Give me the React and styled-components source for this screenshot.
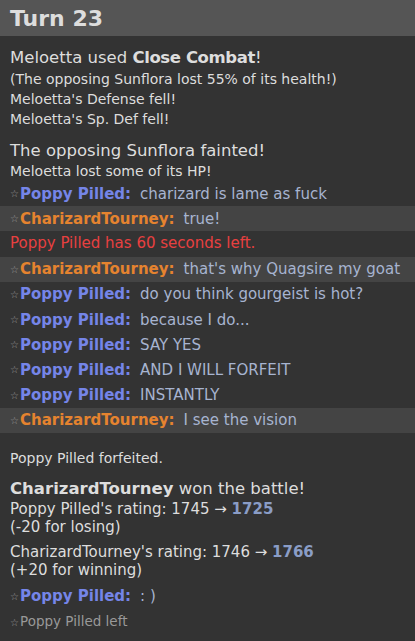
import React from 'react';
import styled, { createGlobalStyle } from 'styled-components';

const GlobalStyle = createGlobalStyle`
	html, body {
		margin: 0;
		padding: 0;
		background: #333333;
	}
	body {
		font-family: 'DejaVu Sans', Verdana, sans-serif;
		color: #dddddd;
	}
`;

const Page = styled.div`
	width: 415px;
	height: 641px;
	overflow: hidden;
	background: #333333;
`;

const Header = styled.h2`
	margin: 0;
	height: 36px;
	padding: 0 10px;
	display: flex;
	align-items: center;
	background: #555555;
	color: #dddddd;
	font-size: 22px;
	font-weight: bold;
`;

const Block = styled.div`
	margin-top: ${p => p.$top || 0}px;
`;

const Line = styled.div`
	padding: 0 10px;
	font-size: ${p => p.$size || 14}px;
	line-height: ${p => p.$lh || 20}px;
	color: ${p => p.$color || '#dddddd'};
	white-space: nowrap;
`;

const Move = styled.strong`
	letter-spacing: -0.4px;
`;

const ChatRow = styled.div`
	height: 25.2px;
	padding: 0 10px;
	display: flex;
	align-items: center;
	background: ${p => (p.$highlight ? '#444444' : 'transparent')};
	white-space: nowrap;
`;

const Star = styled.span`
	font-size: 10px;
	color: #999999;
	margin-right: 1px;
`;

const Name = styled.strong`
	font-size: 15px;
	color: ${p => p.$color};
	margin-right: 9px;
`;

const ChatText = styled.span`
	font-size: 15px;
	color: #a7b4d0;
`;

const Rating = styled.strong`
	color: #8a9dc6;
`;

const LeftNote = styled.div`
	padding: 0 10px;
	font-size: 13.5px;
	line-height: 25px;
	color: #999999;
`;

const users = {
	poppy: { name: 'Poppy Pilled', color: '#7585e8' },
	char: { name: 'CharizardTourney', color: '#e5832f' },
};

const chat = [
	{ who: 'poppy', text: 'charizard is lame as fuck' },
	{ who: 'char', text: 'true!' },
	{ timer: 'Poppy Pilled has 60 seconds left.' },
	{ who: 'char', text: "that's why Quagsire my goat" },
	{ who: 'poppy', text: 'do you think gourgeist is hot?' },
	{ who: 'poppy', text: 'because I do...' },
	{ who: 'poppy', text: 'SAY YES' },
	{ who: 'poppy', text: 'AND I WILL FORFEIT' },
	{ who: 'poppy', text: 'INSTANTLY' },
	{ who: 'char', text: 'I see the vision' },
];

const ChatLine = ({ who, text }) => {
	const user = users[who];
	return (
		<ChatRow $highlight={who === 'char'}>
			<Star>☆</Star>
			<Name $color={user.color}>{user.name}:</Name>
			<ChatText>{text}</ChatText>
		</ChatRow>
	);
};

const App = () => {
	return (
		<Page>
			<GlobalStyle />
			<Header>Turn 23</Header>
			<Block $top={11}>
				<Line $size={16.5} $lh={22}>
					Meloetta used <Move>Close Combat</Move>!
				</Line>
				<Line>(The opposing Sunflora lost 55% of its health!)</Line>
				<Line>Meloetta's Defense fell!</Line>
				<Line>Meloetta's Sp. Def fell!</Line>
			</Block>
			<Block $top={11}>
				<Line $size={16.5} $lh={22}>
					The opposing Sunflora fainted!
				</Line>
				<Line $lh={19}>Meloetta lost some of its HP!</Line>
			</Block>
			<Block>
				{chat.map((c, i) =>
					c.timer ? (
						<Line key={i} $size={15} $lh={25.2} $color="#e84040">
							{c.timer}
						</Line>
					) : (
						<ChatLine key={i} who={c.who} text={c.text} />
					)
				)}
			</Block>
			<Block $top={15}>
				<Line>Poppy Pilled forfeited.</Line>
			</Block>
			<Block $top={10}>
				<Line $size={16.5} $lh={22}>
					<strong>CharizardTourney</strong> won the battle!
				</Line>
				<Line $size={15} $lh={18}>
					Poppy Pilled's rating: 1745 → <Rating>1725</Rating>
				</Line>
				<Line $size={15} $lh={18}>
					(-20 for losing)
				</Line>
				<Block $top={7}>
					<Line $size={15} $lh={18}>
						CharizardTourney's rating: 1746 → <Rating>1766</Rating>
					</Line>
					<Line $size={15} $lh={18}>
						(+20 for winning)
					</Line>
				</Block>
			</Block>
			<Block $top={5}>
				<ChatLine who="poppy" text=": )" />
				<LeftNote>
					<Star>☆</Star>Poppy Pilled left
				</LeftNote>
			</Block>
		</Page>
	);
};

export default App;
